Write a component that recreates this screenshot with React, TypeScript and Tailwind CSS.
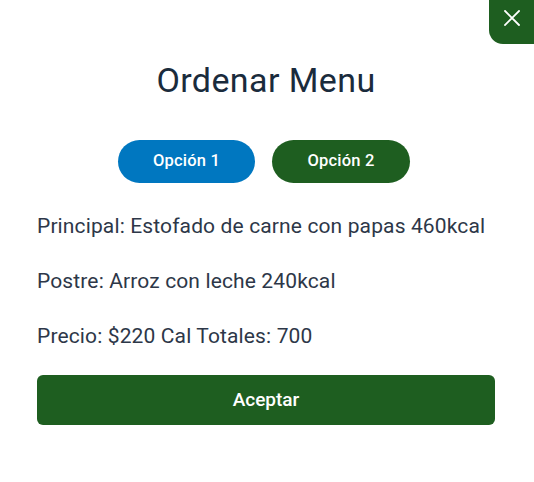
import React from "react";

export default function App() {
  return (
    <div className="relative w-[534px] h-[482px] bg-white" style={{ fontFamily: "Roboto, 'Noto Sans', sans-serif" }}>
      <button className="absolute top-0 right-0 w-[45px] h-[44px] bg-[#1e5e20] rounded-bl-[14px] flex justify-center pt-[10px]">
        <svg width="16" height="16" viewBox="0 0 16 16" fill="none" stroke="white" strokeWidth="1.8" strokeLinecap="square">
          <path d="M1 1 L15 15 M15 1 L1 15" />
        </svg>
      </button>
      <div className="flex flex-col pl-[37px] pr-[39px] pt-[58px]">
        <h1 className="text-center text-[34px] leading-[44px] tracking-[0.4px] text-[#1a2b3c] font-normal">Ordenar Menu</h1>
        <div className="flex justify-center gap-[17px] mt-[38px] pr-[4px]">
          <button className="w-[137px] h-[43px] rounded-full bg-[#0077c0] text-white text-[16.5px] font-medium tracking-[0.2px]">Opción 1</button>
          <button className="w-[138px] h-[43px] rounded-full bg-[#1e5e20] text-white text-[16.5px] font-medium tracking-[0.2px]">Opción 2</button>
        </div>
        <div className="flex flex-col gap-[31px] mt-[31px] text-[21px] leading-[24px] tracking-[0.13px] text-[#2d3748]">
          <p>Principal: Estofado de carne con papas 460kcal</p>
          <p>Postre: Arroz con leche 240kcal</p>
          <p>Precio: $220 Cal Totales: 700</p>
        </div>
        <button className="mt-[27px] h-[50px] w-full rounded-[6px] bg-[#1e5e20] text-white text-[19px] font-medium">Aceptar</button>
      </div>
    </div>
  );
}
